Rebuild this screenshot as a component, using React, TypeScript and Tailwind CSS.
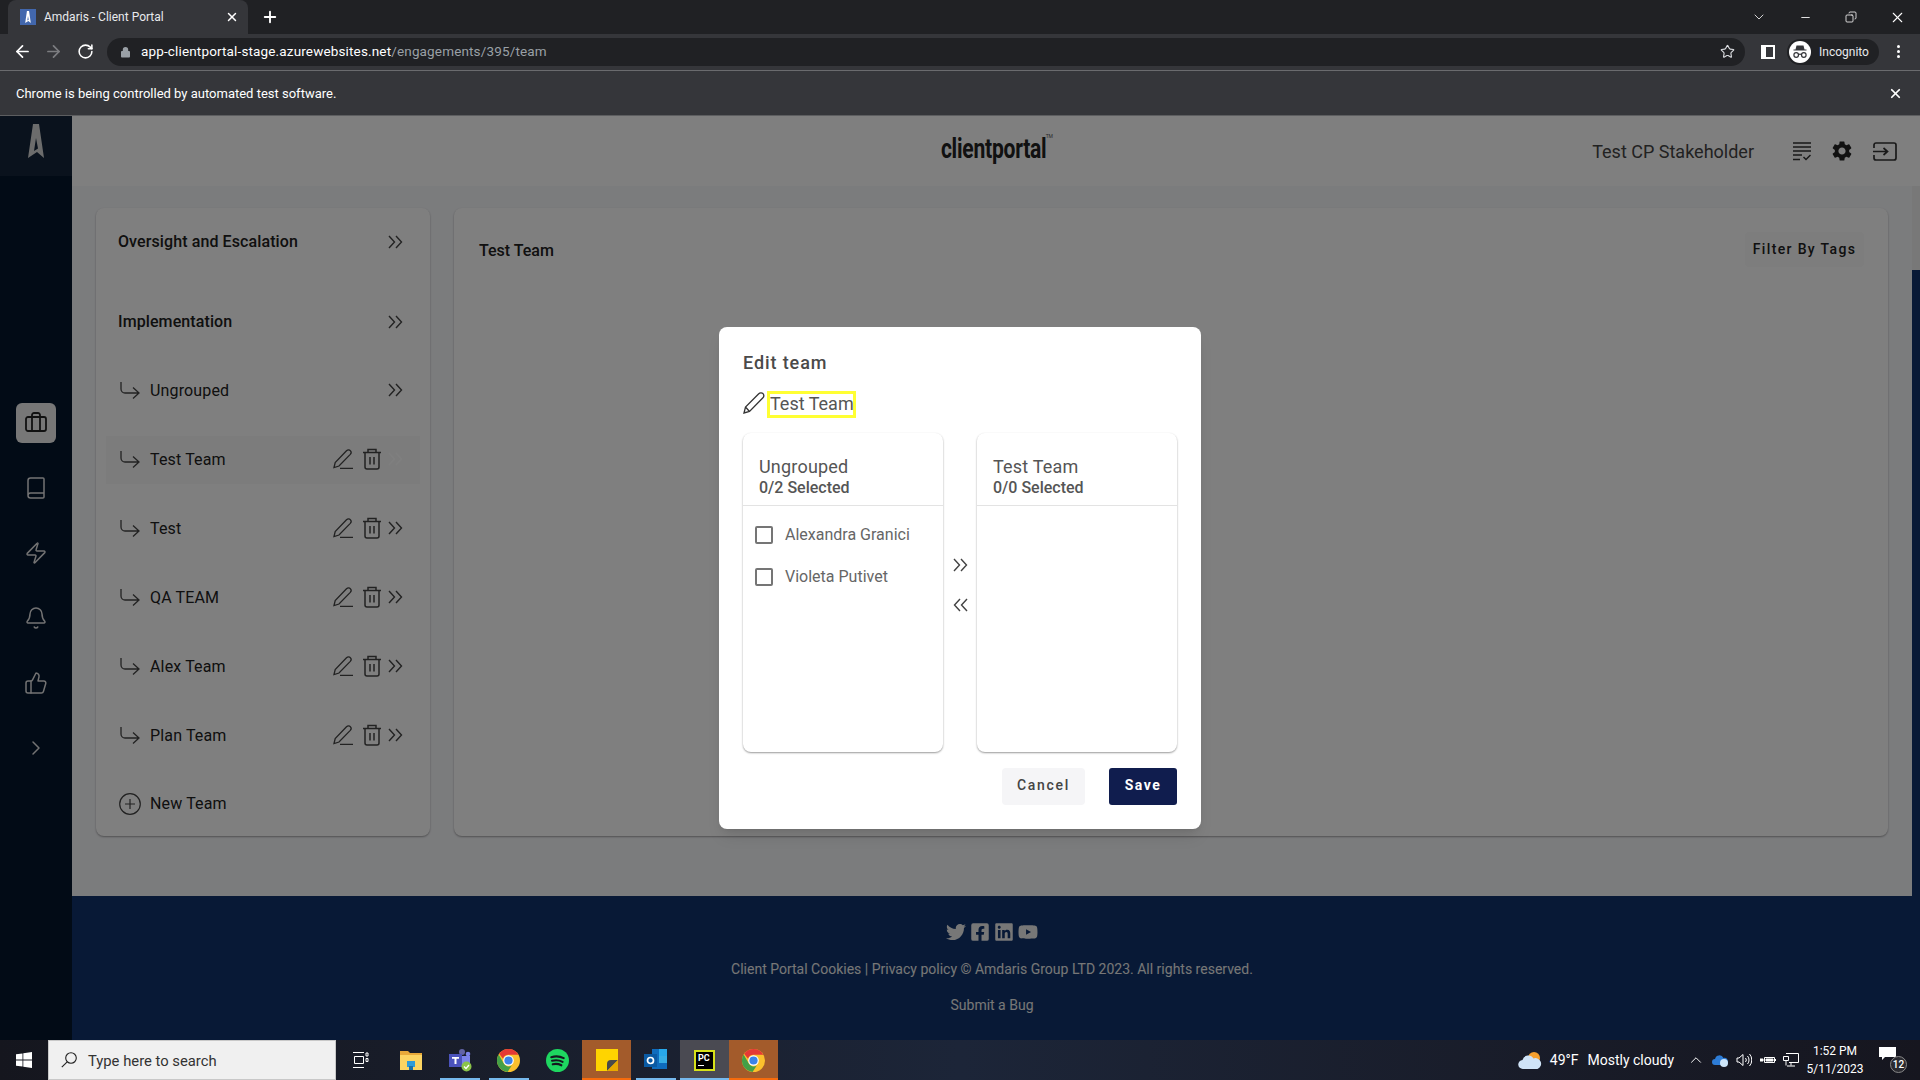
import {
  ArrowLeft,
  ArrowRight,
  Bell,
  Book,
  Briefcase,
  ChevronRight,
  ChevronDown,
  ChevronUp,
  Copy,
  Minus,
  Plus,
  RotateCw,
  Star,
  ThumbsUp,
  X,
  Zap,
} from 'lucide-react';
import { FaFacebookSquare, FaLinkedin, FaTwitter, FaYoutube } from 'react-icons/fa';
import { MdSettings } from 'react-icons/md';

function Chevrons({ left = false, color = 'currentColor' }: { left?: boolean; color?: string }) {
  return (
    <svg viewBox="0 0 15 14" className={`h-[14px] w-[15px] ${left ? 'rotate-180' : ''}`} fill="none" stroke={color} strokeWidth="1.4">
      <path d="M1 1l5.5 6L1 13M8 1l5.500 6L8 13" />
    </svg>
  );
}

function HookArrow() {
  return (
    <svg viewBox="0 0 20 18" className="h-[18px] w-[20px] shrink-0" fill="none" stroke="#444" strokeWidth="1.3">
      <path d="M1 0v7a4 4 0 0 0 4 4h13M13 5.500l6 5.500-6 5.500" />
    </svg>
  );
}

function EditIcon() {
  return (
    <svg viewBox="0 0 21 20" className="h-[20px] w-[21px]" fill="none" stroke="#444" strokeWidth="1.300">
      <path d="M1 18.500l1.200-5L13.500 1.800c1.200-1.200 3-1.200 4 0s.8 2.500-.2 3.600L6 17l-5 1.500zM7 19.300h13" />
    </svg>
  );
}

function TrashIcon() {
  return (
    <svg viewBox="0 0 20 22" className="h-[22px] w-[20px]" fill="none" stroke="#444" strokeWidth="1.500">
      <path d="M1 4.500h18M6 4.500V1.500h8v3M3 4.500v14.500a2 2 0 0 0 2 2h10a2 2 0 0 0 2-2V4.500M8 9v7.500M12 9v7.500" />
    </svg>
  );
}

function AmdarisMark({ className, fill }: { className: string; fill: string }) {
  return (
    <svg viewBox="0 0 16 34" className={className}>
      <path fill={fill} fillRule="evenodd" d="M5 0h6l5 34-7-6-9 6L5 0zm3 14l-2 13 4-2.500L8 14z" />
    </svg>
  );
}

function ChromeLogo() {
  return (
    <svg viewBox="0 0 24 24" className="h-[23px] w-[23px]">
      <circle cx="12" cy="12" r="12" fill="#fbc02d" />
      <path fill="#e53935" d="M12 0a12 12 0 0 1 10.400 6H12a6 6 0 0 0-5.700 4.200L2.200 5A12 12 0 0 1 12 0z" />
      <path fill="#43a047" d="M1.700 5.800A12 12 0 0 0 11 24l4.400-6.800a6 6 0 0 1-8.600-2.500L1.700 5.800z" />
      <circle cx="12" cy="12" r="5.500" fill="#fff" />
      <circle cx="12" cy="12" r="4.300" fill="#3b82e8" />
    </svg>
  );
}

const teamRows = ['Test Team', 'Test', 'QA TEAM', 'Alex Team', 'Plan Team'];

const sideIcons = [Book, Zap, Bell, ThumbsUp, ChevronRight];

function TeamRow({ name, active }: { name: string; active: boolean }) {
  return (
    <div className={`mt-[21px] flex h-[48px] items-center pl-[14px] pr-[17px] ${active ? 'bg-[#f9f9f9]' : ''}`}>
      <HookArrow />
      <span className="ml-[10px] flex-1 text-[16px] tracking-[0.15px] text-[#212121]">{name}</span>
      <div className="mb-[2px] flex items-center">
        <EditIcon />
        <span className="ml-[8px]">
          <TrashIcon />
        </span>
        <span className="ml-[6px]">
          <Chevrons color={active ? '#ffffff' : '#444'} />
        </span>
      </div>
    </div>
  );
}

function GroupRow({ name, className }: { name: string; className: string }) {
  return (
    <div className={`flex h-[48px] items-center pl-[12px] pr-[17px] text-[#212121] ${className}`}>
      <span className="flex-1 text-[16px] font-medium tracking-[0.1px]">{name}</span>
      <span className="text-[#444]">
        <Chevrons />
      </span>
    </div>
  );
}

function TransferPanel({ title, count, people }: { title: string; count: string; people: string[] }) {
  return (
    <div className="h-[319px] w-[200px] rounded-lg bg-white shadow-[0_1px_2px_rgba(0,0,0,0.4)]">
      <div className="h-[73px] border-b border-[#e3e3e3] pl-4 pt-[23px]">
        <p className="text-[18px] leading-[22px] tracking-[0.2px] text-[#555]">{title}</p>
        <p className="text-[16px] font-medium leading-[20px] text-[#555]">{count}</p>
      </div>
      <div className="pl-3 pt-2">
        {people.map((person) => (
          <div key={person} className="flex h-[42px] items-center">
            <span className="h-[18px] w-[18px] rounded-[2px] border-2 border-[#757575]" />
            <span className="ml-3 text-[16px] text-[#666]">{person}</span>
          </div>
        ))}
      </div>
    </div>
  );
}

function TaskCell({ bar, bg, children }: { bar?: string; bg?: string; children: React.ReactNode }) {
  return (
    <div className={`relative flex h-10 w-[49px] items-center justify-center ${bg ?? ''}`}>
      {children}
      {bar && <span className={`absolute bottom-0 h-[2px] ${bar}`} />}
    </div>
  );
}

export default function App() {
  return (
    <div className="flex h-screen w-screen flex-col overflow-hidden bg-[#202124] [font-family:Roboto,sans-serif]">
      {/* browser chrome */}
      <div className="flex h-[34px] items-end bg-[#202124] pl-2 text-white">
        <div className="flex h-[34px] w-[240px] items-center rounded-t-lg bg-[#35363a] pl-3 pr-2">
          <span className="flex h-4 w-4 items-center justify-center bg-[#4267ad]">
            <AmdarisMark className="h-3 w-2" fill="#fff" />
          </span>
          <span className="ml-2 flex-1 text-[12px] text-[#e8eaed]">Amdaris - Client Portal</span>
          <X size={14} strokeWidth={2.5} className="mr-[1px]" />
        </div>
        <Plus size={18} strokeWidth={2.500} className="mb-2 ml-[13px]" />
        <div className="ml-auto flex h-full items-center text-white">
          <span className="flex w-[46px] justify-center">
            <ChevronDown size={16} strokeWidth={1.200} />
          </span>
          <span className="flex w-[46px] justify-center">
            <Minus size={13} strokeWidth={1.600} />
          </span>
          <span className="flex w-[46px] justify-center">
            <Copy size={12} strokeWidth={1.600} className="scale-x-[-1]" />
          </span>
          <span className="flex w-[46px] justify-center">
            <X size={17} strokeWidth={1.500} />
          </span>
        </div>
      </div>
      <div className="flex h-[37px] items-center border-b border-[#6a6b6e] bg-[#35363a] pb-px text-white">
        <ArrowLeft size={19} strokeWidth={2.200} className="ml-[13px]" />
        <ArrowRight size={19} strokeWidth={2.200} className="ml-[12px] text-[#7c7d80]" />
        <RotateCw size={17} strokeWidth={2.200} className="ml-[14px]" />
        <div className="ml-[13px] flex h-[28px] w-[1638px] items-center rounded-full bg-[#202124] pl-[14px] pr-[10px]">
          <svg viewBox="0 0 10 12" className="h-[12px] w-[9px]" fill="#9aa0a6">
            <path d="M1 5h1V3.500a3 3 0 0 1 6 0V5h1a1 1 0 0 1 1 1v5a1 1 0 0 1-1 1H1a1 1 0 0 1-1-1V6a1 1 0 0 1 1-1z" />
          </svg>
          <span className="ml-[11px] flex-1 text-[13.5px] tracking-[0.15px] text-white">
            app-clientportal-stage.azurewebsites.net<span className="text-[#9aa0a6]">/engagements/395/team</span>
          </span>
          <Star size={15} strokeWidth={1.800} className="text-[#dadce0]" />
        </div>
        <span className="ml-[16px] flex h-[14px] w-[14px] items-center justify-end bg-white">
          <span className="mr-[2px] h-[10px] w-[7px] bg-[#35363a]" />
        </span>
        <div className="ml-[12px] flex h-[26px] w-[92px] items-center rounded-full bg-[#202124] pl-[2px]">
          <svg viewBox="0 0 22 22" className="h-[22px] w-[22px]">
            <circle cx="11" cy="11" r="11" fill="#fff" />
            <path fill="#35363a" d="M7.500 4.500h7l1 4h2v1h-13v-1h2z" />
            <path fill="none" stroke="#35363a" strokeWidth="1.200" d="M9.500 14a2.300 2.300 0 1 1-4.600 0 2.300 2.300 0 0 1 4.600 0zm7.600 0a2.300 2.300 0 1 1-4.600 0 2.300 2.300 0 0 1 4.600 0zm-7.600-.5c1-.5 2-.5 3 0" />
          </svg>
          <span className="ml-[8px] text-[12px] text-[#e8eaed]">Incognito</span>
        </div>
        <span className="ml-[18px] flex flex-col gap-[2px]">
          <span className="h-[3px] w-[3px] rounded-full bg-white" />
          <span className="h-[3px] w-[3px] rounded-full bg-white" />
          <span className="h-[3px] w-[3px] rounded-full bg-white" />
        </span>
      </div>
      <div className="flex h-[45px] items-center justify-between border-b border-[#5d5e60] bg-[#35363a] pl-4 pr-[17px] text-[13px] text-white">
        <span className="pt-px">Chrome is being controlled by automated test software.</span>
        <X size={15} strokeWidth={2.800} />
      </div>

      {/* page */}
      <div className="relative flex min-h-0 flex-1">
        <aside className="flex w-[72px] shrink-0 flex-col items-center bg-[#04162c]">
          <div className="flex h-[60px] w-full justify-center bg-[#14253a] pt-2">
            <AmdarisMark className="h-[34px] w-4" fill="#d8d8d8" />
          </div>
          <div className="mt-[227px] flex h-10 w-10 items-center justify-center rounded-md bg-[#eeeeee] text-[#222]">
            <Briefcase size={24} strokeWidth={1.800} />
          </div>
          {sideIcons.map((Icon, i) => (
            <div key={i} className="mt-[25px] flex h-10 w-10 items-center justify-center text-[#e6e6e6]">
              <Icon size={24} strokeWidth={1.500} />
            </div>
          ))}
        </aside>

        <div className="flex min-w-0 flex-1 flex-col">
          <header className="grid h-[70px] grid-cols-[1fr_auto_1fr] items-center bg-white text-[#444]">
            <div />
            <div className="relative flex h-[70px] w-[118px] items-center justify-center pb-[4px] pr-[4px]">
              <span className="scale-x-[0.78] text-[27px] font-bold tracking-[-0.3px] text-[#222]">clientportal</span>
              <span className="absolute right-[2px] top-[17px] text-[5px] text-[#555]">TM</span>
            </div>
            <div className="flex items-center justify-end pr-[23px]">
              <span className="text-[18px] text-[#444]">Test CP Stakeholder</span>
              <svg viewBox="0 0 18 19" className="ml-[39px] h-[19px] w-[18px]" fill="none" stroke="#333" strokeWidth="1.500">
                <path d="M0 1h18M0 5h18M0 9h18M0 13h9M0 17.500h7M10.500 15l2.500 2.500 4.500-4.500" />
              </svg>
              <span className="ml-[19px] text-[#222]">
                <MdSettings size={24} />
              </span>
              <svg viewBox="0 0 24 19" className="ml-[19px] h-[19px] w-[24px]" fill="none" stroke="#333" strokeWidth="1.700">
                <path d="M1 6V3a2 2 0 0 1 2-2h18a2 2 0 0 1 2 2v13a2 2 0 0 1-2 2H3a2 2 0 0 1-2-2v-3M0 9.500h14M10.500 6l4 3.500-4 3.500" />
              </svg>
            </div>
          </header>

          <div className="flex min-h-0 flex-1">
            <div className="flex min-w-0 flex-1 flex-col bg-[#f7f8fb]">
              <main className="flex h-[710px] gap-[24px] px-[24px] pb-[60px] pt-[22px]">
                <section className="h-[628px] w-[334px] rounded-lg bg-white px-[10px] pt-[10px] shadow-[0_1px_2px_rgba(0,0,0,0.35)]">
                  <GroupRow name="Oversight and Escalation" className="" />
                  <GroupRow name="Implementation" className="mt-[32px]" />
                  <div className="mt-[21px] flex h-[48px] items-center pl-[14px] pr-[17px]">
                    <HookArrow />
                    <span className="ml-[10px] flex-1 text-[16px] tracking-[0.15px] text-[#212121]">Ungrouped</span>
                    <span className="mb-[2px] text-[#444]">
                      <Chevrons />
                    </span>
                  </div>
                  {teamRows.map((name, i) => (
                    <TeamRow key={name} name={name} active={i === 0} />
                  ))}
                  <div className="mt-[20px] flex h-[48px] items-center pl-[9px]">
                    <svg viewBox="0 0 22 22" className="ml-[4px] h-[22px] w-[22px]" fill="none" stroke="#444" strokeWidth="1.200">
                      <circle cx="11" cy="11" r="10.300" />
                      <path d="M11 6v10M6 11h10" />
                    </svg>
                    <span className="ml-[9px] text-[16px] tracking-[0.15px] text-[#212121]">New Team</span>
                  </div>
                </section>
                <section className="flex h-[628px] flex-1 items-start justify-between rounded-lg bg-white pl-[25px] pr-[24px] pt-[24px] shadow-[0_1px_2px_rgba(0,0,0,0.35)]">
                  <span className="mt-[7px] text-[16px] font-medium text-[#212121]">Test Team</span>
                  <span className="flex h-[35px] w-[119px] items-center justify-center rounded bg-[#fafafa] text-[14px] font-medium tracking-[1.350px] text-[#212121]">
                    Filter By Tags
                  </span>
                </section>
              </main>
              <footer className="flex flex-1 flex-col items-center bg-[#10336c] text-[14px] text-[#eeeeee]">
                <div className="mt-[26px] flex items-center gap-[4px]">
                  <FaTwitter size={20} />
                  <FaFacebookSquare size={20} />
                  <FaLinkedin size={20} />
                  <FaYoutube size={20} />
                </div>
                <p className="mt-[17px] leading-5">
                  Client Portal Cookies | Privacy policy © Amdaris Group LTD 2023. All rights reserved.
                </p>
                <p className="mt-[16px] leading-5">Submit a Bug</p>
              </footer>
            </div>
            <div className="w-2 shrink-0 bg-[#f1f1f1] pt-[84px]">
              <div className="h-full bg-[#10336c]" />
            </div>
          </div>
        </div>

        {/* modal */}
        <div className="absolute inset-0 flex items-center justify-center bg-black/50">
          <div className="h-[502px] w-[482px] rounded-lg bg-white px-6 pt-[24px] shadow-lg">
            <h2 className="text-[18px] font-medium leading-6 tracking-[0.9px] text-[#4a4a4a]">Edit team</h2>
            <div className="mt-[16px] flex items-center">
              <svg viewBox="0 0 22 22" className="mb-[3px] h-[22px] w-[22px]" fill="none" stroke="#333" strokeWidth="1.300">
                <path d="M1 21l1.500-6L15.500 2c1.500-1.500 3.500-1.500 4.500-.3s1 3-.3 4.300L6.500 19.500 1 21zM2.500 15l4 4.500" />
              </svg>
              <span className="ml-[2px] flex h-[27px] w-[89px] items-center whitespace-nowrap border-[3px] border-[#ffff33] pb-[2px] text-[18px] text-[#555]">
                Test Team
              </span>
            </div>
            <div className="mt-[15px] flex">
              <TransferPanel title="Ungrouped" count="0/2 Selected" people={['Alexandra Granici', 'Violeta Putivet']} />
              <div className="flex w-[34px] flex-col items-center justify-center gap-[26px] pb-[15px] text-[#424242]">
                <Chevrons />
                <Chevrons left />
              </div>
              <TransferPanel title="Test Team" count="0/0 Selected" people={[]} />
            </div>
            <div className="mt-[16px] flex justify-end gap-6">
              <button className="h-[37px] w-[83px] rounded bg-[#f5f5f7] pb-[2px] text-[14px] font-medium tracking-[1.700px] text-[#444]">
                Cancel
              </button>
              <button className="h-[37px] w-[68px] rounded-[3px] bg-[#101d4e] pb-[2px] text-[14px] font-bold tracking-[1.500px] text-white">
                Save
              </button>
            </div>
          </div>
        </div>
      </div>

      {/* taskbar */}
      <div className="flex h-10 shrink-0 items-center bg-gradient-to-r from-[#15161e] via-[#1c2538] to-[#16161f] text-white">
        <div className="flex h-10 w-12 items-center justify-center">
          <svg viewBox="0 0 16 16" className="h-4 w-4" fill="#fff">
            <path d="M0 2.300l6.500-.9v6.200H0zM7.300 1.300L16 0v7.600H7.300zM0 8.400h6.500v6.200L0 13.700zM7.300 8.400H16V16l-8.700-1.200z" />
          </svg>
        </div>
        <div className="flex h-10 w-[288px] items-center border border-[#c8c8c8] bg-[#f0f0f0] pl-3 text-[14.8px] text-[#333]">
          <svg viewBox="0 0 16 16" className="h-4 w-4" fill="none" stroke="#222" strokeWidth="1.100">
            <circle cx="10" cy="6" r="5.300" />
            <path d="M6.200 9.800L.8 15.200" />
          </svg>
          <span className="ml-[11px] pt-[2px]">Type here to search</span>
        </div>
        <TaskCell>
          <svg viewBox="0 0 16 16" className="h-4 w-4" fill="none" stroke="#fff" strokeWidth="1">
            <path d="M0 .5h11M0 15.500h11M1.500 4.500h9v7h-9zM13 1v3h2V1zM13 6.500v3h2v-3z" />
          </svg>
        </TaskCell>
        <span className="w-[1px]" />
        <TaskCell>
          <svg viewBox="0 0 24 22" className="h-[22px] w-[24px]">
            <path fill="#e8a93a" d="M1 2h8l2 2h12v4H1z" />
            <path fill="#fcd462" d="M1 6h22v15H1z" />
            <path fill="#2f9bd8" d="M8 12h8v6H8z" />
            <path fill="#1b6fa8" d="M10 17h4v4h-4z" />
          </svg>
        </TaskCell>
        <TaskCell bar="w-10 bg-[#76b9ed]">
          <svg viewBox="0 0 24 24" className="h-6 w-6">
            <circle cx="14" cy="4" r="3" fill="#6264a7" />
            <circle cx="20" cy="6" r="2.300" fill="#7b83eb" />
            <path fill="#7b83eb" d="M11 8h11v9H11z" />
            <path fill="#4b53bc" d="M1 6h13v13H1z" />
            <path fill="#fff" d="M4 9h7v1.800H8.500V16h-2v-5.200H4z" />
            <circle cx="18.500" cy="18.500" r="5" fill="#8bc34a" />
            <path fill="none" stroke="#fff" strokeWidth="1.300" d="M16 18.500l2 2 3-3.500" />
          </svg>
        </TaskCell>
        <TaskCell bar="w-10 bg-[#76b9ed]">
          <ChromeLogo />
        </TaskCell>
        <TaskCell>
          <svg viewBox="0 0 24 24" className="h-[23px] w-[23px]">
            <circle cx="12" cy="12" r="12" fill="#1ed760" />
            <path fill="none" stroke="#15181f" strokeLinecap="round" strokeWidth="2.200" d="M5.500 8.500c4.500-1.300 9-1 13 1M6.300 12.300c3.800-1 7.500-.7 11 1.100M7 16c3.200-.8 6.200-.5 9 1" />
          </svg>
        </TaskCell>
        <TaskCell bg="bg-[#a35b2b]" bar="w-full bg-[#f76b0c]">
          <svg viewBox="0 0 22 22" className="h-[22px] w-[22px]">
            <path fill="#ffd400" d="M0 0h22v22H0z" />
            <path fill="#4a4a4a" d="M11 22V15a4 4 0 0 1 4-4h7L11 22z" />
            <path fill="#e8a800" d="M22 11v11H11z" />
          </svg>
        </TaskCell>
        <TaskCell bar="w-10 bg-[#76b9ed]">
          <svg viewBox="0 0 24 24" className="h-6 w-6">
            <path fill="#0f6cbd" d="M8 1h15v20H8z" />
            <path fill="#28a8ea" d="M15 1h8v7h-8z" />
            <path fill="#50d9ff" d="M15 8h8v7h-8z" opacity="0.6" />
            <path fill="#0a5aa3" d="M0 6h13v13H0z" />
            <circle cx="6.500" cy="12.500" r="3" fill="none" stroke="#fff" strokeWidth="1.700" />
          </svg>
        </TaskCell>
        <TaskCell bg="bg-[#4a4a52]" bar="w-full bg-[#76b9ed]">
          <div className="flex h-[21px] w-[21px] flex-col border-2 border-[#d7e21a] bg-black pl-[2px] pt-px">
            <span className="text-[9px] font-bold leading-[10px] text-white">PC</span>
            <span className="mt-[2px] h-px w-[6px] bg-white" />
          </div>
        </TaskCell>
        <TaskCell bg="bg-[#a35b2b]" bar="w-full bg-[#f76b0c]">
          <ChromeLogo />
        </TaskCell>

        <div className="ml-auto flex items-center pr-[15px]">
          <svg viewBox="0 0 24 19" className="h-[19px] w-[24px]">
            <circle cx="16" cy="7" r="6" fill="#f59f2d" />
            <path fill="#cfe3f7" d="M5 18a4.500 4.500 0 0 1-.5-9 6 6 0 0 1 11-1.500A5 5 0 0 1 19.500 18z" />
          </svg>
          <span className="ml-[8px] text-[14px]">49°F</span>
          <span className="ml-[9px] text-[14px]">Mostly cloudy</span>
          <ChevronUp size={18} strokeWidth={1.300} className="ml-[13px]" />
          <svg viewBox="0 0 16 13" className="ml-[7px] h-[13px] w-[16px]">
            <path fill="#2d7cd6" d="M3 11a3 3 0 0 1 0-6 4.500 4.500 0 0 1 8.500-1A3.500 3.500 0 0 1 13 11z" />
            <circle cx="12" cy="9" r="4" fill="#cfe6fa" />
          </svg>
          <svg viewBox="0 0 16 14" className="ml-[8px] h-[14px] w-[16px]" fill="none" stroke="#fff" strokeWidth="1">
            <path d="M1 5v4h2l4 3.500v-11L3 5zM9.500 5a3 3 0 0 1 0 4M11.500 3a6 6 0 0 1 0 8M13.500 1a9 9 0 0 1 0 12" />
          </svg>
          <svg viewBox="0 0 16 10" className="ml-[8px] h-[10px] w-[16px]" fill="none" stroke="#fff" strokeWidth="1">
            <path d="M4.500 2.500h10v5h-10zM15.500 4v2" />
            <path fill="#fff" d="M6 4h7v2H6zM0 4h3v2H0z" />
          </svg>
          <svg viewBox="0 0 16 14" className="ml-[7px] h-[14px] w-[16px]" fill="none" stroke="#fff" strokeWidth="1">
            <path d="M3 .5h12.500v9H6M.5 3.500h5v4h-5zM3 7.500v5M8 9.500v3M4 13h8" />
          </svg>
          <div className="ml-[7px] flex w-[58px] flex-col items-center text-[12px] leading-[18px]">
            <span>1:52 PM</span>
            <span>5/11/2023</span>
          </div>
          <div className="relative ml-[15px] h-[26px] w-[26px]">
            <svg viewBox="0 0 17 14" className="h-[14px] w-[17px]" fill="#fff">
              <path d="M0 0h17v10H6l-3 3v-3H0z" />
            </svg>
            <span className="absolute bottom-0 right-[-2px] flex h-[17px] w-[17px] items-center justify-center rounded-full border border-[#888] bg-[#2a2a30] text-[10px] font-medium">
              12
            </span>
          </div>
        </div>
      </div>
    </div>
  );
}
